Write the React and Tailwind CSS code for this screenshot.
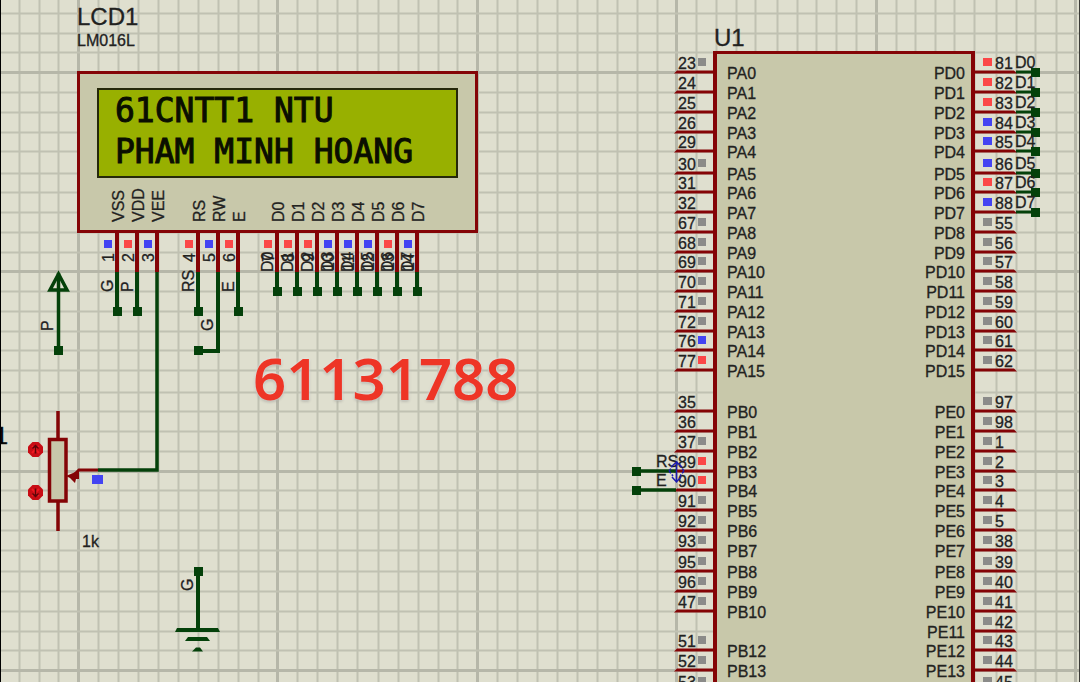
import React from "react";

const RED = "#840406";
const GREEN = "#04410a";

const STATE = { r: "#fb4747", b: "#4444f2", g: "#8b8b89" };

const GRID_X = [
  19, 39, 58, 78, 98, 118, 138, 158, 178, 198, 218, 238, 258, 277, 297, 317, 337, 357, 378, 398,
  418, 438, 457, 477, 497, 517, 537, 557, 577, 597, 617, 637, 657, 676, 696, 716, 736, 755, 777,
  797, 816, 836, 856, 876, 896, 915, 935, 954, 974, 996, 1016, 1035, 1056, 1075,
];
const GRID_Y = [
  13, 33, 52, 72, 92, 112, 132, 151, 173, 192, 212, 232, 252, 271, 291, 311, 331, 350, 370, 392,
  411, 431, 451, 471, 490, 510, 530, 550, 571, 591, 611, 631, 650, 670, 691,
];
const MAJOR_X = [78, 277, 477, 676, 876, 1075];
const MAJOR_Y = [72, 271, 471, 670];

const rowY = (row) => GRID_Y[row + 3];

// [row, pin number, port name, logic state]
const LEFT_PINS = [
  [0, "23", "PA0", "g"], [1, "24", "PA1"], [2, "25", "PA2"], [3, "26", "PA3"],
  [4, "29", "PA4"], [5, "30", "PA5", "g"], [6, "31", "PA6"], [7, "32", "PA7"],
  [8, "67", "PA8", "g"], [9, "68", "PA9", "g"], [10, "69", "PA10", "g"], [11, "70", "PA11", "g"],
  [12, "71", "PA12", "g"], [13, "72", "PA13", "g"], [14, "76", "PA14", "b"], [15, "77", "PA15", "r"],
  [17, "35", "PB0"], [18, "36", "PB1"], [19, "37", "PB2", "g"], [20, "89", "PB3", "r"],
  [21, "90", "PB4", "r"], [22, "91", "PB5", "g"], [23, "92", "PB6", "g"], [24, "93", "PB7", "g"],
  [25, "95", "PB8", "g"], [26, "96", "PB9", "g"], [27, "47", "PB10", "g"],
  [29, "51", "PB12", "g"], [30, "52", "PB13", "g"], [31, "53", null, "g"],
];

const RIGHT_PINS = [
  [0, "81", "PD0", "r", "D0"], [1, "82", "PD1", "r", "D1"], [2, "83", "PD2", "r", "D2"],
  [3, "84", "PD3", "b", "D3"], [4, "85", "PD4", "b", "D4"], [5, "86", "PD5", "b", "D5"],
  [6, "87", "PD6", "r", "D6"], [7, "88", "PD7", "b", "D7"], [8, "55", "PD8", "g"],
  [9, "56", "PD9", "g"], [10, "57", "PD10", "g"], [11, "58", "PD11", "g"],
  [12, "59", "PD12", "g"], [13, "60", "PD13", "g"], [14, "61", "PD14", "g"],
  [15, "62", "PD15", "g"], [17, "97", "PE0", "g"], [18, "98", "PE1", "g"],
  [19, "1", "PE2", "g"], [20, "2", "PE3", "g"], [21, "3", "PE4", "g"], [22, "4", "PE5", "g"],
  [23, "5", "PE6", "g"], [24, "38", "PE7", "g"], [25, "39", "PE8", "g"], [26, "40", "PE9", "g"],
  [27, "41", "PE10", "g"], [28, "42", "PE11", "g"], [29, "43", "PE12", "g"],
  [30, "44", "PE13", "g"], [31, "45", null, "g"],
];

// [x, pin number, function, logic state, net, y where the stub ends]
const LCD_PINS = [
  [117, "1", "VSS", "b", "G", 311], [137, "2", "VDD", "r", "P", 311], [157, "3", "VEE", "b"],
  [198, "4", "RS", "r", "RS", 311], [218, "5", "RW", "b"], [238, "6", "E", "r", "E", 311],
  [277, "7", "D0", "r", "D0", 291], [297, "8", "D1", "r", "D1", 291],
  [317, "9", "D2", "r", "D2", 291], [337, "10", "D3", "b", "D3", 291],
  [357, "11", "D4", "b", "D4", 291], [377, "12", "D5", "b", "D5", 291],
  [397, "13", "D6", "r", "D6", 291], [417, "14", "D7", "b", "D7", 291],
];

function Upright({ x, y, children }) {
  return (
    <text transform={`translate(${x} ${y}) rotate(-90)`}>{children}</text>
  );
}

function Node({ x, y }) {
  return <rect x={x - 4} y={y - 4} width="9" height="9" fill={GREEN} />;
}

function Probe({ x, y, state }) {
  return <rect x={x - 4} y={y - 4} width="8" height="8" fill={STATE[state]} />;
}

function Grid() {
  return (
    <svg className="absolute inset-0 h-full w-full" aria-hidden="true">
      {GRID_X.map((x) => (
        <line key={x} x1={x + 0.5} x2={x + 0.5} y1="0" y2="100%" stroke={MAJOR_X.includes(x) ? "#b6b7a9" : "#c0c1b2"} strokeWidth={MAJOR_X.includes(x) ? 3 : 2} />
      ))}
      {GRID_Y.map((y) => (
        <line key={y} y1={y + 0.5} y2={y + 0.5} x1="0" x2="100%" stroke={MAJOR_Y.includes(y) ? "#b6b7a9" : "#c0c1b2"} strokeWidth={MAJOR_Y.includes(y) ? 3 : 2} />
      ))}
    </svg>
  );
}

function LcdModule() {
  return (
    <section
      aria-label="LCD1"
      className="absolute left-[77px] top-[71px] h-[162px] w-[401px] border-[3px] border-[#840406] bg-[#c8c8aa] px-[17px] pt-[14px]"
    >
      <div className="flex h-[90px] flex-col border-2 border-[#25280a] bg-[#98b000] pl-4 font-['DejaVu_Sans_Mono',monospace] text-[33px] leading-[41px] text-[#0a0e00] [-webkit-text-stroke:1px_#0a0e00]">
        <p className="whitespace-pre">61CNTT1 NTU</p>
        <p className="whitespace-pre">PHAM MINH HOANG</p>
      </div>
    </section>
  );
}

function LcdPins() {
  return (
    <g>
      {LCD_PINS.map(([x, num, name, state, net, end]) => (
        <g key={num}>
          <line x1={x} x2={x} y1="232" y2="272" stroke={RED} strokeWidth="4" />
          {end && <line x1={x} x2={x} y1="272" y2={end} stroke={GREEN} strokeWidth="4" />}
          {end && <Node x={x} y={end} />}
          <Probe x={x - 9} y={244} state={state} />
          <Upright x={x + 7} y={222}>{name}</Upright>
          <Upright x={x - 3} y={num.length > 1 ? 271 : 262}>{num}</Upright>
          {net && <Upright x={x - 4} y={end === 291 ? 272 : 292}>{net}</Upright>}
        </g>
      ))}
      <path d="M218 272V351H199" fill="none" stroke={GREEN} strokeWidth="4" />
      <Node x={198} y={350} />
      <Upright x={213} y={331}>G</Upright>
      <path d="M157 272V470H98" fill="none" stroke={GREEN} strokeWidth="3.5" />
    </g>
  );
}

function PowerTerminal() {
  return (
    <g>
      <path d="M58.5 273V350" stroke={GREEN} strokeWidth="3.5" />
      <path d="M58.5 274L50 290H67Z" fill="none" stroke={GREEN} strokeWidth="3.5" />
      <Node x={58} y={350} />
      <Upright x={53} y={331}>P</Upright>
    </g>
  );
}

function GroundTerminal() {
  return (
    <g>
      <path d="M198 571V629" stroke={GREEN} strokeWidth="4" />
      <path d="M177 628H218L220 632H175Z M188 637H207L210 641H185Z M196 647.500H200L203 651.500H192Z" fill={GREEN} />
      <Node x={198} y={571} />
      <Upright x={193} y={591}>G</Upright>
    </g>
  );
}

function Adjuster({ y, up }) {
  return (
    <g transform={`translate(35.5 ${y})`}>
      <path d="M-3 -7.500H3L7.500 -3V3L3 7.500H-3L-7.500 3V-3Z" fill="#c80c14" />
      <path d="M-3.500 -3.500L3.500 3.500M3.500 -3.500L-3.500 3.500" stroke="#f01820" strokeWidth="2" />
      <path d={up ? "M0 4V-4M-3 -1L0 -4L3 -1" : "M0 -4V4M-3 1L0 4L3 1"} fill="none" stroke="#5c0508" strokeWidth="1.500" />
    </g>
  );
}

function Potentiometer() {
  return (
    <g>
      <path d="M58 411V438M58 502V531" stroke={RED} strokeWidth="3.500" />
      <rect x="49.500" y="439.500" width="16.500" height="61.500" fill="#c8c8aa" stroke={RED} strokeWidth="3.500" />
      <path d="M98 470H79L73 476" fill="none" stroke={RED} strokeWidth="3" />
      <path d="M66 476L79 470.500V479L76 479L75 483L70 478Z" fill={RED} />
      <Adjuster y={449.5} up />
      <Adjuster y={492.5} />
      <rect x="92" y="475" width="11" height="9" fill={STATE.b} />
      <text x="82" y="547">1k</text>
      <text x="8" y="444" textAnchor="end" className="fill-black text-2xl">1</text>
    </g>
  );
}

function ChipPins() {
  return (
    <g>
      {LEFT_PINS.map(([row, num, name, state]) => {
        const y = rowY(row);
        return (
          <g key={num}>
            <path d={`M674 ${y + 1.5}L677 ${y - 1.5}H715V${y + 1.5}Z`} fill={RED} />
            {state && <Probe x={702} y={y - 10} state={state} />}
            <text x="678" y={y - 3}>{num}</text>
            {name && <text x="727" y={y + 7}>{name}</text>}
          </g>
        );
      })}
      {RIGHT_PINS.map(([row, num, name, state, net]) => {
        const y = rowY(row);
        return (
          <g key={num}>
            <path d={`M974 ${y - 1.5}H1014L1017 ${y + 1.5}H974Z`} fill={RED} />
            <rect x="983" y={y - 14} width="9" height="8" fill={STATE[state]} />
            {net && <line x1="1016" x2="1032" y1={y} y2={y} stroke={GREEN} strokeWidth="3" />}
            {net && <Node x={1035} y={y} />}
            <text x="995" y={y - 3}>{num}</text>
            {net && <text x="1015" y={y - 4}>{net}</text>}
            {name && <text x="965" y={y + 7} textAnchor="end">{name}</text>}
          </g>
        );
      })}
      {[[20, "RS"], [21, "E"]].map(([row, net]) => (
        <g key={net}>
          <line x1="637" x2="676" y1={rowY(row)} y2={rowY(row)} stroke={GREEN} strokeWidth="3.500" />
          <Node x={636} y={rowY(row)} />
          <text x="656" y={rowY(row) - 4}>{net}</text>
        </g>
      ))}
    </g>
  );
}

function OriginMark() {
  return (
    <g fill="none" stroke="#1c1cb0" strokeWidth="1.500">
      <path d="M676.500 461V482M671 467L676.500 462L682 467M672 477L676.500 482L681 477" />
      <path d="M669 471L672 467M684 471L681 467M669 471L673 476M684 471L680 476" strokeDasharray="3 1.500" />
    </g>
  );
}

export default function App() {
  return (
    <main className="relative h-screen w-full overflow-hidden border-x border-l-black border-r-[#3a3a36] bg-[#dfdfcf] font-['Liberation_Sans',Arial,sans-serif] text-base">
      <div className="absolute inset-y-0 -left-px -right-px -z-0">
        <Grid />
        <LcdModule />
        <section
          aria-label="U1"
          className="absolute -bottom-2 left-[713px] top-[51px] w-[262px] border-4 border-t-[3px] border-[#840406] bg-[#c8c8aa]"
        />
        <svg className="absolute inset-0 h-full w-full fill-[#22221f] [&_text]:stroke-[#22221f] [&_text]:[stroke-width:0.3px]" role="img" aria-label="Schematic">
          <text x="77" y="25" className="text-2xl">LCD1</text>
          <text x="77" y="46">LM016L</text>
          <text x="714" y="46" className="text-2xl">U1</text>
          <LcdPins />
          <PowerTerminal />
          <GroundTerminal />
          <Potentiometer />
          <ChipPins />
          <OriginMark />
          <path d="M0.500 0V682" stroke="#000" />
        </svg>
        <p className="absolute left-[253px] top-[348px] font-['Noto_Sans',sans-serif] text-[58px] font-semibold leading-[60px] text-[#ee3526] [text-shadow:0_0_3px_#fff,0_1px_3px_#8a8a80]">
          61131788
        </p>
      </div>
    </main>
  );
}
